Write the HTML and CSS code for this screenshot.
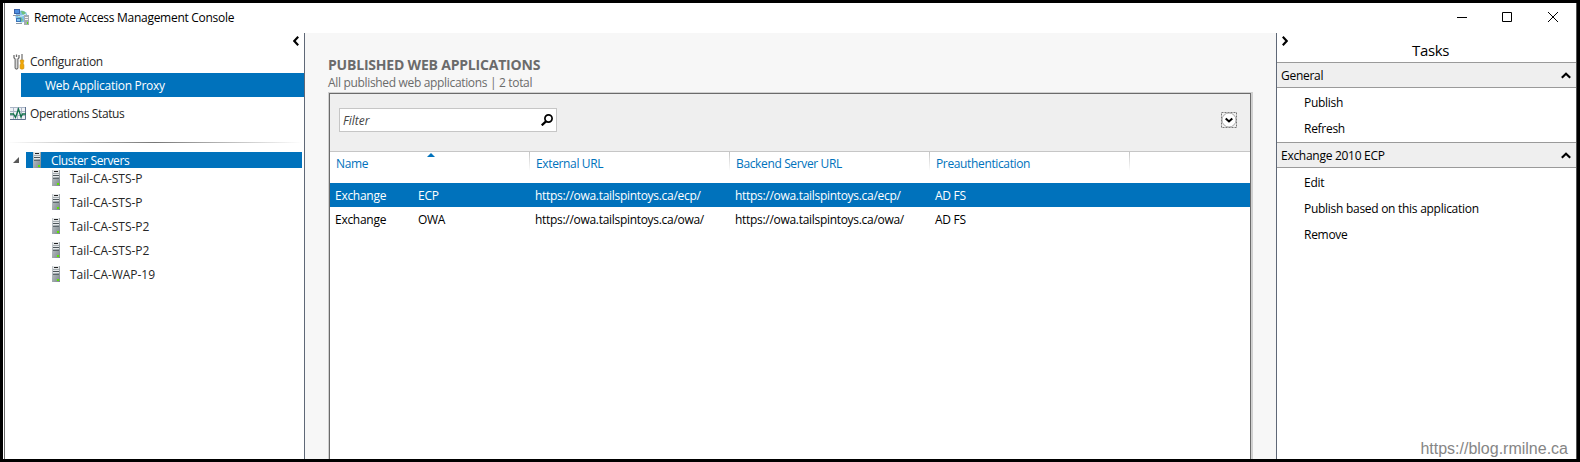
FILE: index.html
```html
<!DOCTYPE html>
<html lang="en">
<head>
  <meta charset="UTF-8" />
  <title>Remote Access Management Console</title>
  <link rel="stylesheet" href="styles.css">
</head>
<body>
  <svg width="0" height="0" class="symbols">
    <linearGradient id="metal" x1="0" y1="0" x2="1" y2="1">
      <stop offset="0" stop-color="#c9ced1" />
      <stop offset="1" stop-color="#7b868c" />
    </linearGradient>
    <symbol id="server" viewBox="0 0 8 16">
      <rect width="8" height="16" fill="url(#metal)" />
      <rect x="1" width="6" height="5" fill="#e4e7e9" />
      <rect x="2" y="1" width="4" height="1" fill="#222" />
      <rect x="1" y="3" width="6" height="1" fill="#a5adb1" />
      <rect x="1" y="5" width="6" height="1" fill="#4d565b" />
      <rect x="1" y="6" width="6" height="1" fill="#e3e7e9" />
      <rect x="1" y="8" width="6" height="1" fill="#5e686d" />
      <rect x="5" y="13" width="2" height="2" fill="#5be600" />
    </symbol>
    <symbol id="chevron-up" viewBox="0 0 10 7">
      <path d="M0.8 5.8 5 1.8l4.2 4" fill="none" stroke="#000" stroke-width="2.1" />
    </symbol>
  </svg>

  <div class="window">
    <header class="titlebar">
      <svg class="app-icon" width="16" height="16" viewBox="0 0 16 16">
        <circle cx="8.500" cy="7.500" r="6" fill="#7fc0ea" />
        <path d="M8 2q3-.5 5 2l-2 2-2-1zM4 9l4-1 2 3-2 2q-3-1-4-4z" fill="#6fc27c" />
        <path d="M5 7q4 1 8-2" stroke="#e0f4ff" fill="none" />
        <path d="M1 0h6v5H1z" fill="#3a62a8" />
        <path d="M2 1h4v3H2z" fill="#4f8fe0" />
        <path d="M0 6h7v1H0z" fill="#8a97a3" />
        <path d="M3 9h5v4H3z" fill="#3f74b8" />
        <path d="M4 10h3v2H4z" fill="#7cc4f2" />
        <path d="M3 14h6v1H3z" fill="#8a97a3" />
        <rect x="11" y="6" width="5" height="10" fill="#a3abb0" />
        <path d="M12 8.500h3M12 10.500h3" stroke="#f3f3f3" />
        <rect x="14" y="13" width="1" height="2" fill="#5be600" />
      </svg>
      <span class="title">Remote Access Management Console</span>
      <div class="window-buttons">
        <svg width="10" height="10" viewBox="0 0 10 10"><path d="M0 5.500h10" /></svg>
        <svg width="10" height="10" viewBox="0 0 10 10"><path d="M.5.5h9v9h-9z" /></svg>
        <svg class="close" width="10" height="10" viewBox="0 0 10 10"><path d="M0 0l10 10M10 0L0 10" /></svg>
      </div>
    </header>

    <div class="content">
      <nav class="sidebar">
        <div class="collapse">
          <svg width="6" height="10" viewBox="0 0 6 10"><path d="M5.200.8 1.300 5l3.900 4.200" fill="none" stroke="#000" stroke-width="2.100" /></svg>
        </div>
        <div class="nav-item">
          <svg class="tools-icon" width="12" height="16" viewBox="0 0 12 16">
            <path d="M1 1v2.700l1.200 1.500V14q1.300 2.200 2.600 0V5.200L6 3.700V1M3.500.5V3" fill="none" stroke="#6d6d6d" stroke-width="1.300" />
            <path d="M3.500 4.500v9.500" stroke="#d8d8d8" stroke-width="1.400" />
            <path d="M9 0v7" stroke="#888" stroke-width="1.500" />
            <path d="M7.300 6h3.400v2l-.7 1 .9 2v3.500q-1.900 1.500-3.800 0V11L8 9l-.7-1z" fill="#f0a808" stroke="#c98a08" stroke-width=".6" />
          </svg>
          <span>Configuration</span>
        </div>
        <div class="nav-sub selected">Web Application Proxy</div>
        <div class="nav-item status">
          <svg width="16" height="13" viewBox="0 0 16 13">
            <path d="M0 0h16v13H0z" fill="#eef1f6" />
            <path d="M0 .5h16M0 4.500h16M0 8.500h16M3.500 0v13M7.500 0v13M11.500 0v13" stroke="#aab5c6" />
            <path d="M0 12.500h15.500V0" fill="none" stroke="#5c6f8c" />
            <path d="M0 7h3.500l2 3.500L8.500 2l2.500 8 1.500-3H16" fill="none" stroke="#10704a" stroke-width="1.300" />
          </svg>
          <span>Operations Status</span>
        </div>
        <div class="separator"></div>
        <div class="tree-root">
          <svg class="expander" width="6" height="6" viewBox="0 0 6 6"><path d="M6 0v6H0z" fill="#595959" /></svg>
          <div class="root-label selected">
            <svg width="8" height="16"><use href="#server" /></svg>
            <span>Cluster Servers</span>
          </div>
        </div>
        <div class="tree">
          <div class="node"><svg width="8" height="16"><use href="#server" /></svg><span>Tail-CA-STS-P</span></div>
          <div class="node"><svg width="8" height="16"><use href="#server" /></svg><span>Tail-CA-STS-P</span></div>
          <div class="node"><svg width="8" height="16"><use href="#server" /></svg><span>Tail-CA-STS-P2</span></div>
          <div class="node"><svg width="8" height="16"><use href="#server" /></svg><span>Tail-CA-STS-P2</span></div>
          <div class="node"><svg width="8" height="16"><use href="#server" /></svg><span>Tail-CA-WAP-19</span></div>
        </div>
      </nav>

      <main class="main">
        <h1>PUBLISHED WEB APPLICATIONS</h1>
        <p class="summary">All published web applications | 2 total</p>
        <div class="panel">
          <div class="toolbar">
            <div class="filter">
              <span>Filter</span>
              <svg width="12" height="12" viewBox="0 0 12 12"><circle cx="7.500" cy="4.500" r="3.600" fill="none" stroke="#000" stroke-width="1.700" /><path d="M5 7.300.7 11.300" stroke="#000" stroke-width="2.300" /></svg>
            </div>
            <svg class="expand" width="16" height="16" viewBox="0 0 16 16">
              <rect x=".5" y=".5" width="15" height="15" fill="none" stroke="#777" stroke-dasharray="2 1" />
              <circle cx="8" cy="8" r="7" fill="#fff" stroke="#999" stroke-width=".8" />
              <path d="M4.700 6.500 8 9.500l3.300-3" fill="none" stroke="#000" stroke-width="2" />
            </svg>
          </div>
          <div class="row head">
            <div class="name">Name<svg class="sort" width="8" height="4" viewBox="0 0 8 4"><path d="M4 0l4 4H0z" fill="#0072bc" /></svg></div>
            <div>External URL</div>
            <div>Backend Server URL</div>
            <div>Preauthentication</div>
          </div>
          <div class="row selected">
            <div class="name"><span>Exchange</span><span>ECP</span></div>
            <div class="url">https://owa.tailspintoys.ca/ecp/</div>
            <div class="url">https://owa.tailspintoys.ca/ecp/</div>
            <div>AD FS</div>
          </div>
          <div class="row">
            <div class="name"><span>Exchange</span><span>OWA</span></div>
            <div class="url">https://owa.tailspintoys.ca/owa/</div>
            <div class="url">https://owa.tailspintoys.ca/owa/</div>
            <div>AD FS</div>
          </div>
        </div>
      </main>

      <aside class="tasks">
        <div class="tasks-top">
          <svg width="6" height="10" viewBox="0 0 6 10"><path d="M.8.8 4.700 5 .8 9.200" fill="none" stroke="#000" stroke-width="2.100" /></svg>
          <h2>Tasks</h2>
        </div>
        <div class="group"><span>General</span><svg width="10" height="7"><use href="#chevron-up" /></svg></div>
        <ul>
          <li>Publish</li>
          <li>Refresh</li>
        </ul>
        <div class="group"><span>Exchange 2010 ECP</span><svg width="10" height="7"><use href="#chevron-up" /></svg></div>
        <ul>
          <li>Edit</li>
          <li>Publish based on this application</li>
          <li>Remove</li>
        </ul>
        <div class="watermark">https://blog.rmilne.ca</div>
      </aside>
    </div>
  </div>
</body>
</html>
```
FILE: styles.css
```css
:root {
  --blue: #0072bc;
  --line: #5f6877;
}

* {
  box-sizing: border-box;
}

body {
  margin: 0;
  font-family: "Open Sans", "Noto Sans", sans-serif;
  font-size: 12px;
  letter-spacing: -0.28px;
  color: #000;
  white-space: nowrap;
}

svg {
  display: block;
  flex: none;
}

.symbols {
  position: absolute;
}

.window {
  width: 1580px;
  height: 462px;
  border: 3px solid #000;
  background: linear-gradient(#6b6b6b, #6b6b6b) 1px 0 / 1px 100% no-repeat #fff;
  padding-left: 2px;
  display: flex;
  flex-direction: column;
  overflow: hidden;
}

.titlebar {
  height: 30px;
  display: flex;
  align-items: center;
  padding: 0 0 2px 8px;
  border-right: 1px solid #555;
}

.title {
  margin-left: 5px;
}

.window-buttons {
  margin-left: auto;
  display: flex;
  gap: 35px;
  padding-right: 18px;
}

.window-buttons .close {
  margin-left: 1px;
}

.window-buttons path {
  fill: none;
  stroke: #000;
}

.content {
  flex: 1;
  display: flex;
  min-height: 0;
}

.selected {
  background: var(--blue);
  color: #fff;
}

/* left navigation */
.sidebar {
  width: 300px;
  border-right: 1px solid var(--line);
  color: #262626;
}

.collapse {
  height: 17px;
  padding: 3px 5px 0 0;
  display: flex;
  justify-content: flex-end;
}

.nav-item {
  height: 23px;
  display: flex;
  align-items: center;
  padding-left: 5px;
}

.nav-item svg {
  margin-right: 4px;
}

.nav-item .tools-icon {
  margin: 0 5px 0 3px;
}

.nav-sub {
  height: 24px;
  line-height: 26px;
  margin-left: 16px;
  padding-left: 24px;
}

.sidebar .selected {
  color: #fff;
}

.status {
  height: 32px;
  letter-spacing: -0.36px;
}

.separator {
  height: 1px;
  margin: 13px 2px 9px;
  background: linear-gradient(to right, #fff, #777 50%, #fff);
}

.tree-root {
  display: flex;
  align-items: center;
  padding: 0 2px 0 8px;
}

.root-label {
  flex: 1;
  height: 16px;
  line-height: 18px;
  letter-spacing: -0.4px;
  margin-left: 7px;
  padding-left: 7px;
  display: flex;
  gap: 10px;
}

.tree {
  padding: 2px 0 0 47px;
  letter-spacing: -0.05px;
}

.node {
  height: 24px;
  line-height: 18px;
  display: flex;
  gap: 10px;
}

/* applications list */
.main {
  width: 971px;
  background: #f7f7f7;
  padding: 23px 23px 0;
  display: flex;
  flex-direction: column;
}

h1 {
  margin: 0;
  font-size: 14px;
  line-height: 18px;
  font-weight: 700;
  letter-spacing: -0.2px;
  color: #6b6b6b;
}

.summary {
  margin: 0;
  height: 18px;
  line-height: 18px;
  letter-spacing: -0.33px;
  color: #6b6b6b;
}

.panel {
  flex: 1;
  width: 925px;
  border: 1px solid #d0d0d0;
  border-width: 1px 2px 0 1px;
  background: #fff;
  box-shadow: inset 1px 1px #6b6b6b, inset -1px 0 #6b6b6b;
  padding: 1px 1px 0;
}

.toolbar {
  height: 58px;
  background: #efefef;
  border-bottom: 1px solid #c6c6c6;
  padding: 14px 13px 0 9px;
  display: flex;
  justify-content: space-between;
}

.filter {
  width: 218px;
  height: 24px;
  border: 1px solid #c6c6c6;
  background: #fff;
  display: flex;
  align-items: center;
  justify-content: space-between;
  padding: 0 3px;
  font-style: italic;
  letter-spacing: 0;
  color: #444;
}

.expand {
  margin-top: 4px;
}

.row {
  height: 24px;
  line-height: 25px;
  display: grid;
  grid-template-columns: 200px 200px 200px 200px 1fr;
}

.row > div {
  padding-left: 5px;
}

.row .name {
  display: grid;
  grid-template-columns: 83px 1fr;
}

.row .url {
  letter-spacing: -0.3px;
}

.row.head {
  height: 31px;
  line-height: 24px;
  letter-spacing: -0.36px;
  color: var(--blue);
}

.row.head > div {
  padding-left: 6px;
  background: linear-gradient(#c6c6c6, #fff) right top / 1px 19px no-repeat;
}

.sort {
  margin: 1px 0 0 8px;
}

/* tasks pane */
.tasks {
  flex: 1;
  border-left: 1px solid var(--line);
  border-right: 1px solid #555;
  display: flex;
  flex-direction: column;
}

.tasks-top {
  height: 29px;
  padding: 3px 0 0 5px;
  display: flex;
}

h2 {
  flex: 1;
  margin: 3px 0 0 -3px;
  font-size: 15px;
  font-weight: 400;
  line-height: 22px;
  letter-spacing: -0.4px;
  text-align: center;
}

.group {
  height: 26px;
  border: 1px solid #9a9a9a;
  border-width: 1px 0;
  background: #efefef;
  display: flex;
  align-items: center;
  justify-content: space-between;
  padding: 0 5px 0 4px;
}

ul {
  list-style: none;
  margin: 0;
  padding: 2px 0 0 27px;
}

li {
  height: 26px;
  line-height: 26px;
}

.watermark {
  margin: auto 8px 0 0;
  font-family: "Liberation Sans", Arial, sans-serif;
  font-size: 16px;
  line-height: 20px;
  letter-spacing: 0;
  text-align: right;
  color: #858585;
}
```
